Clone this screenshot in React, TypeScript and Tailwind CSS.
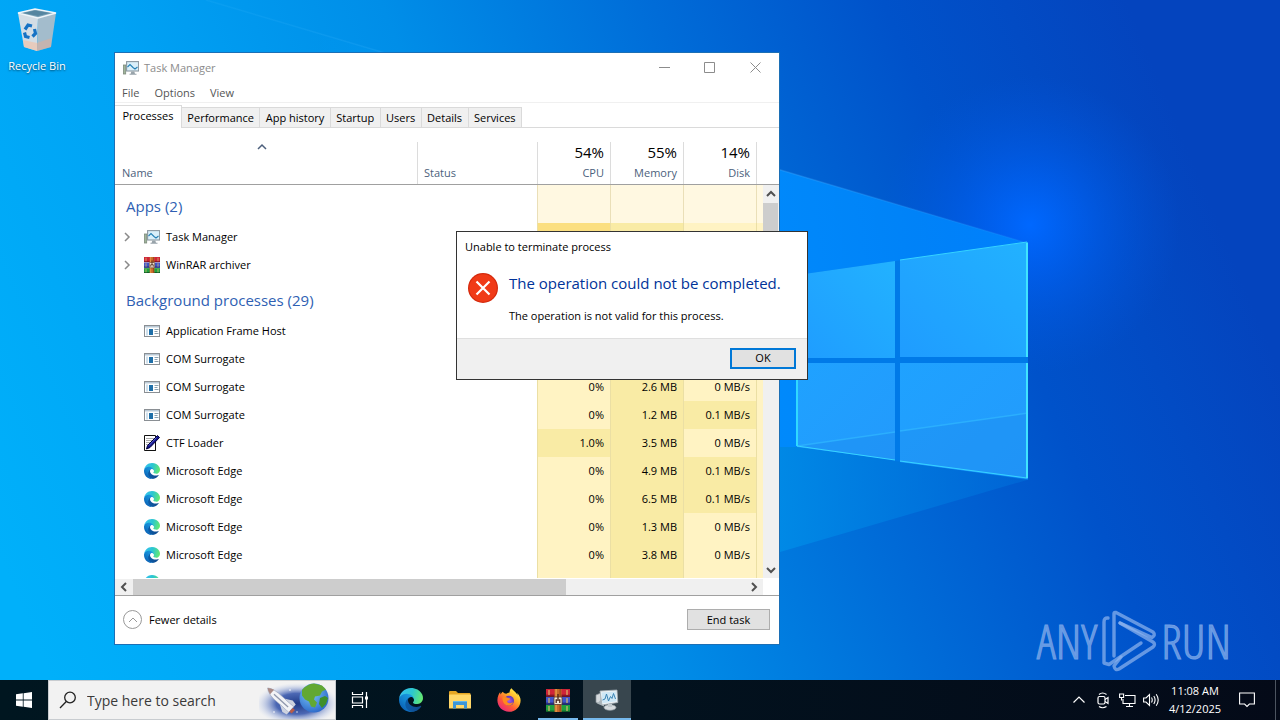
import { useId, type ReactNode } from 'react';
import clsx from 'clsx';

type Shade = 'head' | 'low' | 'mid' | 'high';

type Process = {
  name: string;
  icon: 'taskmgr' | 'winrar' | 'window' | 'ctf' | 'edge';
  expandable?: boolean;
  cells: [string, Shade][];
};

const shades: Record<Shade, string> = {
  head: 'bg-[#fff8e1] border-[#eadfb8]',
  low: 'bg-[#fff3c3] border-[#ebdfa4]',
  mid: 'bg-[#f9eba5] border-[#ebdfa4]',
  high: 'bg-[#fbdf80] border-[#ebdfa4]',
};

const tabs = ['Processes', 'Performance', 'App history', 'Startup', 'Users', 'Details', 'Services'];

const usage = [
  { label: 'CPU', value: '54%' },
  { label: 'Memory', value: '55%' },
  { label: 'Disk', value: '14%' },
];

const apps: Process[] = [
  { name: 'Task Manager', icon: 'taskmgr', expandable: true, cells: [['', 'high'], ['', 'mid'], ['', 'low']] },
  { name: 'WinRAR archiver', icon: 'winrar', expandable: true, cells: [['', 'low'], ['', 'mid'], ['', 'low']] },
];

const background: Process[] = [
  { name: 'Application Frame Host', icon: 'window', cells: [['', 'low'], ['', 'mid'], ['', 'low']] },
  { name: 'COM Surrogate', icon: 'window', cells: [['', 'low'], ['', 'mid'], ['', 'low']] },
  { name: 'COM Surrogate', icon: 'window', cells: [['0%', 'low'], ['2.6 MB', 'mid'], ['0 MB/s', 'low']] },
  { name: 'COM Surrogate', icon: 'window', cells: [['0%', 'low'], ['1.2 MB', 'mid'], ['0.1 MB/s', 'mid']] },
  { name: 'CTF Loader', icon: 'ctf', cells: [['1.0%', 'mid'], ['3.5 MB', 'mid'], ['0 MB/s', 'low']] },
  { name: 'Microsoft Edge', icon: 'edge', cells: [['0%', 'low'], ['4.9 MB', 'mid'], ['0.1 MB/s', 'mid']] },
  { name: 'Microsoft Edge', icon: 'edge', cells: [['0%', 'low'], ['6.5 MB', 'mid'], ['0.1 MB/s', 'mid']] },
  { name: 'Microsoft Edge', icon: 'edge', cells: [['0%', 'low'], ['1.3 MB', 'mid'], ['0 MB/s', 'low']] },
  { name: 'Microsoft Edge', icon: 'edge', cells: [['0%', 'low'], ['3.8 MB', 'mid'], ['0 MB/s', 'low']] },
  { name: '', icon: 'edge', cells: [['', 'low'], ['', 'mid'], ['', 'low']] },
];

/* ---------- icons ---------- */

function EdgeIcon({ className }: { className?: string }) {
  const id = useId();
  return (
    <svg viewBox="0 0 256 256" className={className}>
      <defs>
        <linearGradient id={`${id}a`} x1="0.2" y1="0.5" x2="1" y2="0.5">
          <stop offset="0" stopColor="#0c59a4" />
          <stop offset="1" stopColor="#114a8b" />
        </linearGradient>
        <linearGradient id={`${id}b`} x1="0.8" y1="0.1" x2="0.2" y2="0.9">
          <stop offset="0" stopColor="#1b9de2" />
          <stop offset="0.5" stopColor="#1384d0" />
          <stop offset="1" stopColor="#0a5fb4" />
        </linearGradient>
        <linearGradient id={`${id}c`} x1="0" y1="0.4" x2="1" y2="0.6">
          <stop offset="0" stopColor="#35c1f1" />
          <stop offset="0.5" stopColor="#2cc6cf" />
          <stop offset="1" stopColor="#66eb6e" />
        </linearGradient>
      </defs>
      <path fill={`url(#${id}a)`} d="M231 190.5c-3.4 1.8-6.9 3.4-10.5 4.7-11.5 4.3-23.6 6.5-35.9 6.5-47.3 0-88.5-32.5-88.5-74.3.1-11.4 6.4-21.9 16.4-27.3-42.8 1.8-53.8 46.4-53.8 72.5 0 73.9 68.1 81.4 82.8 81.4 7.9 0 19.8-2.3 27-4.6l1.3-.4c27.6-9.5 51-28.1 66.6-52.8 1.2-1.9.6-4.3-1.2-5.5-1.3-.8-2.9-.9-4.2-.2z" />
      <path fill={`url(#${id}b)`} d="M105.7 241.4c-8.9-5.5-16.6-12.8-22.7-21.3-26.3-36-18.4-86.5 17.6-112.8 3.8-2.7 7.7-5.2 11.9-7.2 3.1-1.5 8.4-4.1 15.5-4 10.1.1 19.6 4.9 25.7 13 4 5.4 6.3 11.9 6.4 18.7 0-.2 24.5-79.6-80-79.6-43.9 0-80 41.7-80 78.2-.2 19.3 4 38.5 12.1 56 27.6 58.8 94.8 87.6 156.4 67.1-21.1 6.6-44.1 3.7-62.9-8.1z" />
      <path fill={`url(#${id}c)`} d="M152.3 148.9c-.9 1-3.4 2.5-3.4 5.6 0 2.6 1.7 5.2 4.8 7.3 14.3 10 41.4 8.6 41.5 8.6 10.7 0 21.1-2.9 30.3-8.3 18.8-11 30.4-31.1 30.4-52.9.3-22.4-8-37.3-11.3-43.9C223.5 23.9 177.7 0 128 0 58 0 1 56.2 0 126.2c.5-36.5 36.8-66 80-66 3.5 0 23.5.3 42 10.1 16.3 8.6 24.9 19 30.8 29.3 6.2 10.7 7.3 24.1 7.3 29.5 0 5.3-2.7 13.3-7.8 19.9z" />
    </svg>
  );
}

function WinRarIcon({ className }: { className?: string }) {
  const books = [
    { y: 0, main: '#cf2438', dark: '#8a1526' },
    { y: 8, main: '#3f55cc', dark: '#27307c' },
    { y: 16, main: '#1fa040', dark: '#115f28' },
  ];
  return (
    <svg viewBox="0 0 24 23" preserveAspectRatio="none" className={className}>
      {books.map((b) => (
        <g key={b.y}>
          <rect x="0" y={b.y} width="24" height="7.4" fill={b.main} />
          <rect x="0" y={b.y + 5.6} width="24" height="1.8" fill={b.dark} />
          <rect x="2.4" y={b.y + 1} width="1.2" height="5" fill="#d9b96a" />
          <rect x="20.4" y={b.y + 1} width="1.2" height="5" fill="#d9b96a" />
        </g>
      ))}
      <rect x="8.5" y="0" width="7" height="23" fill="#c8692a" />
      <rect x="9.5" y="0" width="1.2" height="23" fill="#eaa24c" />
      <rect x="13.6" y="0" width="1" height="23" fill="#8c3f14" />
      <rect x="8" y="8" width="8" height="7.5" rx="1" fill="#f0e8d8" stroke="#5b3a22" strokeWidth="0.8" />
      <path d="M10.2 14v-3h3.6v3M12 5v5" fill="none" stroke="#4b241a" strokeWidth="1.3" />
    </svg>
  );
}

function TaskManagerIcon({ className }: { className?: string }) {
  return (
    <svg viewBox="0 0 16 16" className={className}>
      <rect x="0.5" y="5" width="2.2" height="9" fill="#9fb59a" stroke="#7d8a7c" strokeWidth="0.8" />
      <rect x="3.6" y="1.6" width="12" height="9.4" fill="#d9effa" stroke="#8b98a1" strokeWidth="1.1" />
      <path d="M4.5 7L7 4.5l3 3L12 9l2.5-2" fill="none" stroke="#2580b5" strokeWidth="1.1" />
      <path d="M8.3 11.5h3l.7 2.2h1.5v1.1h-7v-1.1h1.2z" fill="#98a3aa" />
    </svg>
  );
}

function WindowIcon({ className }: { className?: string }) {
  return (
    <svg viewBox="0 0 16 16" className={className}>
      <rect x="0.5" y="2.5" width="15" height="11" fill="#fff" stroke="#8a8f94" />
      <rect x="1" y="3" width="14" height="1.5" fill="#b9c9d6" />
      <rect x="2" y="5.5" width="2" height="7" fill="#cfe0ec" />
      <rect x="5" y="6" width="4" height="6" fill="#1f6fa8" />
      <path d="M10.5 6.5h4M10.5 8.5h3M10.5 10.5h4" stroke="#7f97a8" strokeWidth="0.9" />
    </svg>
  );
}

function CtfIcon({ className }: { className?: string }) {
  return (
    <svg viewBox="0 0 16 16" className={className}>
      <path d="M.5.5h11v15H.5z" fill="#fff" stroke="#111" />
      <path d="M2.5 3.5h7M2.5 5.5h6M2.5 7.5h4M2.5 9.5h3" stroke="#555" strokeDasharray="1 1" />
      <path d="M13.5.5l2 2L6 12.5 2.5 14l1-3.5z" fill="#14148c" stroke="#00003c" />
      <path d="M12.5 2.5L5 10.5" stroke="#8fa5ff" strokeWidth="0.6" />
      <path d="M11.5 8v7.5H2" stroke="#111" fill="none" />
    </svg>
  );
}

function FirefoxIcon({ className }: { className?: string }) {
  return (
    <svg viewBox="0 0 24 24" className={className}>
      <defs>
        <linearGradient id="ff-body" x1="0.85" y1="0.1" x2="0.2" y2="0.95">
          <stop offset="0" stopColor="#fff04a" />
          <stop offset="0.35" stopColor="#ffae28" />
          <stop offset="0.65" stopColor="#ff5a36" />
          <stop offset="1" stopColor="#e9267c" />
        </linearGradient>
        <radialGradient id="ff-core">
          <stop offset="0" stopColor="#a85cf0" />
          <stop offset="1" stopColor="#5b36b8" />
        </radialGradient>
      </defs>
      <path fill="url(#ff-body)" d="M22.8 9c-.6-1.7-1.9-3.4-2.9-4 .5 1 .8 2 .8 2.6C19 3.6 16.3 3.2 14.6.2c-1.5 1-2.1 3-2 4.3-1.3.1-2.5.6-3.4 1.3C8 5.6 6.6 5.2 6 3.8 4.8 4.4 4 5.6 3.7 6.400c-.4-.5-.5-1.7-.4-2.4C2 5.2.4 8.5.4 12.3.4 18.7 5.6 23.8 12 23.8s11.6-5 11.6-11.4c0-1.3-.3-2.400-.8-3.400z" />
      <circle cx="12" cy="12.8" r="5" fill="url(#ff-core)" />
      <path fill="#ff8a1e" d="M5.5 9.5c2-.9 4-.4 5.5.6 1 .2 2.2.3 2.2.9 0 .7-2 1.2-2.9 1.9-.4.6.2 2.2 2.2 2.3 1.7 0 2.6-1 3.6-.7-.8 2.4-3 3.5-5.3 3.1-3.600-.7-5.600-4.300-5.300-8.100z" />
    </svg>
  );
}

function ExplorerIcon({ className }: { className?: string }) {
  return (
    <svg viewBox="0 0 22 18" className={className}>
      <path d="M0 1a1 1 0 011-1h6l2 2h11.5a1 1 0 011 1v3H0z" fill="#e5a623" />
      <rect x="0" y="3.5" width="22" height="14" rx="0.6" fill="#ffd768" />
      <path d="M4 17.5V11a1 1 0 011-1h12a1 1 0 011 1v6.5h-3V14H7v3.5z" fill="#3c96d8" />
      <path d="M4 10.5h14" stroke="#62b7ea" />
    </svg>
  );
}

function TaskManagerLarge({ className }: { className?: string }) {
  return (
    <svg viewBox="0 0 24 24" className={className}>
      <path d="M1 7l5-2v11l-5-1.5z" fill="#d5dadd" stroke="#8d979c" strokeWidth="0.7" />
      <path d="M2 15.5l7 3V9" fill="#aab4b9" />
      <path d="M5 3l17-1 .8 12.5L7 17z" fill="#eef2f4" stroke="#a4afb5" strokeWidth="0.8" />
      <path d="M6.5 4.5l14.5-.9.5 9.7-14 2z" fill="#cfe8f6" />
      <path d="M7.5 12l2.5-1 1.5-5 2 7 2-4.5 1.5 2 1.5-5 2 5.5" fill="none" stroke="#3b84b4" />
      <ellipse cx="15" cy="19.5" rx="6" ry="2.8" fill="#d6dbde" stroke="#98a2a7" strokeWidth="0.7" />
      <path d="M13 16h4v3h-4z" fill="#c0c8cc" />
    </svg>
  );
}

function RecycleBinIcon({ className }: { className?: string }) {
  return (
    <svg viewBox="0 0 40 44" className={className}>
      <path d="M1 5l20 4-1 34-13-4z" fill="#d3dde5" />
      <path d="M39 5L21 9l-1 34 14-4z" fill="#a3bccc" />
      <path d="M1 5l17-4 21 4-18 5z" fill="#7ba3b8" stroke="#eef5fa" strokeWidth="1.3" />
      <path d="M6 5l12-2.5L33 5 21 8z" fill="#5585a0" />
      <path d="M6 32l14 3v8L7 39z" fill="#f0c3ac" opacity="0.7" />
      <path d="M20 35l14.5-5-.5 9-14 4z" fill="#dbaf9c" opacity="0.6" />
      <g fill="none" stroke="#1672c4" strokeWidth="3.2">
        <path d="M8 21.5l3-4.5 4 1" />
        <path d="M17.5 21l1 4.5-3 3" />
        <path d="M12.5 29.5l-4-1-1-4" />
      </g>
    </svg>
  );
}

function Caret({ dir, className }: { dir: 'up' | 'down' | 'left' | 'right'; className?: string }) {
  const d = {
    up: 'M1 7l4-4 4 4',
    down: 'M1 3l4 4 4-4',
    left: 'M7 1L3 5l4 4',
    right: 'M3 1l4 4-4 4',
  }[dir];
  return (
    <svg viewBox="0 0 10 10" className={className} fill="none" stroke="currentColor">
      <path d={d} />
    </svg>
  );
}

function ProcessIcon({ icon }: { icon: Process['icon'] }) {
  if (icon === 'taskmgr') return <TaskManagerIcon className="size-4 shrink-0" />;
  if (icon === 'winrar') return <WinRarIcon className="size-4 shrink-0" />;
  if (icon === 'window') return <WindowIcon className="size-4 shrink-0" />;
  if (icon === 'ctf') return <CtfIcon className="size-4 shrink-0" />;
  return <EdgeIcon className="size-4 shrink-0" />;
}

/* ---------- desktop ---------- */

function Wallpaper() {
  return (
    <svg className="absolute inset-0 size-full" viewBox="0 0 1280 680" preserveAspectRatio="xMidYMid slice">
      <defs>
        <linearGradient id="sky" gradientUnits="userSpaceOnUse" x1="0" y1="560" x2="1160" y2="80">
          <stop offset="0" stopColor="#00b0fa" />
          <stop offset="0.25" stopColor="#00a2f4" />
          <stop offset="0.45" stopColor="#008ee8" />
          <stop offset="0.65" stopColor="#006cd8" />
          <stop offset="0.82" stopColor="#0052ca" />
          <stop offset="1" stopColor="#0444be" />
        </linearGradient>
        <radialGradient id="glow" gradientUnits="userSpaceOnUse" cx="1030" cy="225" r="150">
          <stop offset="0" stopColor="#0068ff" />
          <stop offset="0.35" stopColor="#0064fa" stopOpacity="0.6" />
          <stop offset="1" stopColor="#0058e0" stopOpacity="0" />
        </radialGradient>
        <linearGradient id="beam" gradientUnits="userSpaceOnUse" x1="0" y1="0" x2="1027" y2="0">
          <stop offset="0.3" stopColor="#00a4ff" stopOpacity="0" />
          <stop offset="0.76" stopColor="#008cff" stopOpacity="0.9" />
          <stop offset="1" stopColor="#0088ff" stopOpacity="0.8" />
        </linearGradient>
        <linearGradient id="beam-edge" gradientUnits="userSpaceOnUse" x1="206" y1="0" x2="1027" y2="0">
          <stop offset="0" stopColor="#4cc0ff" stopOpacity="0.1" />
          <stop offset="0.7" stopColor="#4cb0ff" stopOpacity="0.3" />
          <stop offset="1" stopColor="#4cb0ff" stopOpacity="0.1" />
        </linearGradient>
        <linearGradient id="floor" gradientUnits="userSpaceOnUse" x1="400" y1="0" x2="1027" y2="0">
          <stop offset="0" stopColor="#00a4f4" stopOpacity="0" />
          <stop offset="0.6" stopColor="#008ee8" stopOpacity="0.8" />
          <stop offset="1" stopColor="#0070dc" stopOpacity="0.5" />
        </linearGradient>
        <linearGradient id="pane" x1="0" y1="1" x2="1" y2="0">
          <stop offset="0" stopColor="#1f9cff" />
          <stop offset="1" stopColor="#22b2ff" />
        </linearGradient>
        <linearGradient id="pane-low" x1="0" y1="0" x2="1" y2="1">
          <stop offset="0" stopColor="#1fa2ff" />
          <stop offset="1" stopColor="#239afc" />
        </linearGradient>
      </defs>
      <rect width="1280" height="680" fill="url(#sky)" />
      <rect width="1280" height="680" fill="url(#glow)" />
      <path d="M0 0H206L1027 243V362L797 447H0z" fill="url(#beam)" />
      <path d="M0 447H797L1027 362V480L340 680H0z" fill="url(#floor)" />
      <path d="M206 0L1027 243" stroke="url(#beam-edge)" strokeWidth="1.5" />
      <path d="M797 275L1028 242V480L797 447z" fill="#007ae8" />
      <path d="M797 275l98-14v97h-98z" fill="url(#pane)" />
      <path d="M900 260l128-18v115H900z" fill="url(#pane)" />
      <path d="M797 363h98v97l-98-13z" fill="url(#pane-low)" />
      <path d="M900 363h128v116l-128-17z" fill="url(#pane-low)" />
      <path d="M797 446l98-14v28zM900 431l128-18v65l-128-17z" fill="#1a84ea" fillOpacity="0.3" />
      <path d="M797 446l98-14M900 431l128-18" stroke="#30b8ff" strokeOpacity="0.7" strokeWidth="1.5" />
      <path d="M900 260l127-18M1027 478l-127-17M895 460l-98-14" fill="none" stroke="#36d4ff" />
      <path d="M1027 243v114M1027 363v115" stroke="#40e4ff" strokeWidth="2" />
      <path d="M797 363v83" stroke="#30d8ff" strokeWidth="2" />
    </svg>
  );
}

function Watermark() {
  return (
    <div className="absolute right-[49px] bottom-[8px] flex items-center gap-1 font-['Open_Sans_Condensed_Light','Open_Sans_Condensed','Liberation_Sans_Narrow',sans-serif] text-5xl leading-[62px] font-light text-[#8fb5ee]/70">
      <span className="[-webkit-text-stroke:1px_#6f9fe6]">ANY</span>
      <svg viewBox="0 0 56 62" className="h-[62px] w-14 shrink-0" fill="none" stroke="currentColor" strokeWidth="3.4" strokeLinejoin="round" strokeLinecap="round">
        <path d="M13 46V3.500q0-1.500 2-1L52 22q3 3-1 5.500L19 13" />
        <path d="M7 8q-4-.5-4 4v41l5 1.500L40 33" />
        <path d="M20 47L13 56q1 5 5 3L52 37q3-3 0-5L19 13" />
      </svg>
      <span className="[-webkit-text-stroke:1px_#6f9fe6]">RUN</span>
    </div>
  );
}

/* ---------- task manager ---------- */

function ProcessRow({ process }: { process: Process }) {
  return (
    <tr>
      <td colSpan={2} className="p-0">
        <div className="flex h-7 items-center pl-[9px]">
          <span className="flex w-5 text-[#8a8a8a]">
            {process.expandable && <Caret dir="right" className="-ml-0.5 size-2.5 stroke-[1.5]" />}
          </span>
          <ProcessIcon icon={process.icon} />
          <span className="pl-1.5">{process.name}</span>
        </div>
      </td>
      {process.cells.map(([value, shade], i) => (
        <td key={i} className={clsx('border-r px-1.5 py-0 text-right', i === 0 && 'border-l', shades[shade])}>
          {value}
        </td>
      ))}
      <td className={shades.low} />
    </tr>
  );
}

function GroupRow({ children }: { children: ReactNode }) {
  return (
    <tr>
      <td colSpan={2} className="p-0">
        <div className="flex h-[38px] items-center pt-1 pl-[11px] text-[15px] text-[#2f5fb3]">{children}</div>
      </td>
      {usage.map((u, i) => (
        <td key={u.label} className={clsx('border-r p-0', i === 0 && 'border-l', shades.head)} />
      ))}
      <td className={shades.head} />
    </tr>
  );
}

function ProcessTable() {
  return (
    <div className="flex min-h-0 flex-1 overflow-hidden">
      <div className="min-w-0 flex-1 overflow-hidden">
        <table className="w-full table-fixed border-separate border-spacing-0">
          <colgroup>
            <col />
            <col className="w-[119px]" />
            <col className="w-[74px]" />
            <col className="w-[73px]" />
            <col className="w-[73px]" />
            <col className="w-[6px]" />
          </colgroup>
          <thead>
            <tr className="text-[#4c5f7c]">
              <th className="border-b border-[#a0a0a0] p-0 pt-3.5 text-left font-normal">
                <div className="flex h-[42px] flex-col justify-between border-r border-[#dcdcdc] px-[7px] pb-[3px]">
                  <Caret dir="up" className="mr-2 size-2.5 self-center stroke-[1.5]" />
                  <span className="leading-4">Name</span>
                </div>
              </th>
              <th className="border-b border-[#a0a0a0] p-0 pt-3.5 text-left font-normal">
                <div className="flex h-[42px] items-end px-1.5 pb-[3px] leading-4">Status</div>
              </th>
              {usage.map((u, i) => (
                <th key={u.label} className="border-b border-[#a0a0a0] p-0 pt-3.5 text-right font-normal">
                  <div className={clsx('flex h-[42px] flex-col justify-between border-r border-[#dcdcdc] px-1.5 pb-[3px]', i === 0 && 'border-l')}>
                    <span className="text-[15px] leading-5 text-black">{u.value}</span>
                    <span className="leading-4">{u.label}</span>
                  </div>
                </th>
              ))}
              <th className="border-b border-[#a0a0a0] p-0" />
            </tr>
          </thead>
          <tbody>
            <GroupRow>Apps (2)</GroupRow>
            {apps.map((p) => (
              <ProcessRow key={p.name} process={p} />
            ))}
            <GroupRow>Background processes (29)</GroupRow>
            {background.map((p, i) => (
              <ProcessRow key={i} process={p} />
            ))}
          </tbody>
        </table>
      </div>
      <div className="flex w-4 flex-col">
        <div className="h-[57px] border-b border-[#a0a0a0]" />
        <div className="flex min-h-0 flex-1 flex-col items-center bg-[#f0f0f0] pr-px text-[#505050]">
          <div className="flex h-[18px] items-center">
            <Caret dir="up" className="size-2.5 stroke-2" />
          </div>
          <div className="h-28 w-full bg-[#cdcdcd]" />
          <Caret dir="down" className="mt-auto mb-[3px] size-2.5 stroke-2" />
        </div>
      </div>
    </div>
  );
}

function TaskManagerWindow() {
  return (
    <section className="absolute top-[52px] left-[114px] flex h-[593px] w-[666px] flex-col border border-[#1c6fb5] bg-white text-black">
      <header className="flex h-[30px] shrink-0 items-center pl-2 text-[#8c8c8c]">
        <TaskManagerIcon className="size-4" />
        <h1 className="pl-[5px]">Task Manager</h1>
        <div className="ml-auto flex self-start">
          <button aria-label="Minimize" className="grid h-7 w-[45px] place-items-center">
            <svg viewBox="0 0 11 11" className="size-[11px]" stroke="currentColor"><path d="M0 5.5h11" /></svg>
          </button>
          <button aria-label="Maximize" className="grid h-7 w-[45px] place-items-center">
            <svg viewBox="0 0 11 11" className="size-[11px]" fill="none" stroke="currentColor"><path d="M.5.5h10v10H.5z" /></svg>
          </button>
          <button aria-label="Close" className="grid h-7 w-[47px] place-items-center">
            <svg viewBox="0 0 11 11" className="size-[11px]" stroke="currentColor"><path d="M.5.5l10 10M10.5.5l-10 10" /></svg>
          </button>
        </div>
      </header>

      <nav className="flex h-5 shrink-0 items-center gap-[15px] border-b border-[#f0f0f0] pl-[7px] text-[#555]">
        <button>File</button>
        <button>Options</button>
        <button>View</button>
      </nav>

      <div className="h-[25px] shrink-0 border-b border-[#dadada] pt-0.5">
        <div role="tablist" className="flex w-[407px] items-end">
          {tabs.map((tab, i) => (
            <button
              key={tab}
              role="tab"
              aria-selected={i === 0}
              className={clsx(
                'grow border-t border-r border-[#dadada] px-[5px]',
                i === 0 ? '-mb-px h-[23px] bg-white px-[7px] pb-0.5' : 'h-5 bg-[#f0f0f0]',
              )}
            >
              {tab}
            </button>
          ))}
        </div>
      </div>

      <ProcessTable />

      <div className="flex h-[17px] shrink-0 items-center border-t border-white pr-4 text-[#505050]">
        <div className="flex h-4 flex-1 items-center bg-[#f0f0f0]">
          <Caret dir="left" className="mx-1 size-2.5 stroke-2" />
          <div className="h-full w-[433px] bg-[#cdcdcd]" />
          <Caret dir="right" className="mr-1 ml-auto size-2.5 stroke-2" />
        </div>
      </div>

      <footer className="flex h-[49px] shrink-0 items-center justify-between border-t border-[#a0a0a0] pr-[9px] pb-px pl-2">
        <button className="flex items-center gap-[7px]">
          <span className="grid size-[19px] place-items-center rounded-full border border-[#999] text-[#999]">
            <Caret dir="up" className="size-2.5" />
          </span>
          Fewer details
        </button>
        <button className="h-[21px] w-[83px] border border-[#adadad] bg-[#e1e1e1]">End task</button>
      </footer>
    </section>
  );
}

function ErrorDialog() {
  return (
    <div role="alertdialog" className="absolute top-[231px] left-[456px] w-[352px] border border-[#333] bg-white text-black">
      <p className="px-2 pt-1.5 leading-[18px]">Unable to terminate process</p>
      <div className="flex gap-[11px] px-[11px] pt-[15px] pb-3.5">
        <svg viewBox="0 0 30 30" className="mt-0.5 size-[30px] shrink-0">
          <circle cx="15" cy="15" r="15" fill="#d4290c" />
          <circle cx="15" cy="15" r="13.8" fill="#f03a17" />
          <path d="M8.5 8.5l13 13M21.5 8.5l-13 13" stroke="#fff" strokeWidth="2.2" />
        </svg>
        <div>
          <h2 className="text-[15px] leading-6 whitespace-nowrap text-[#003399]">The operation could not be completed.</h2>
          <p className="pt-[13px] leading-4">The operation is not valid for this process.</p>
        </div>
      </div>
      <div className="flex h-[41px] items-center justify-end border-t border-[#dfdfdf] bg-[#f0f0f0] pr-[11px] pb-0.5">
        <button className="h-[21px] w-[66px] border-2 border-[#0078d7] bg-[#e1e1e1] leading-4">OK</button>
      </div>
    </div>
  );
}

/* ---------- taskbar ---------- */

function SearchArt() {
  return (
    <svg viewBox="0 0 76 38" className="h-[38px] w-[76px] shrink-0">
      <defs>
        <radialGradient id="space" cx="0.5" cy="0.6" r="0.55">
          <stop offset="0" stopColor="#203a86" />
          <stop offset="0.5" stopColor="#4c68b4" />
          <stop offset="1" stopColor="#c9d6f2" stopOpacity="0" />
        </radialGradient>
        <radialGradient id="ocean" cx="0.4" cy="0.35" r="0.7">
          <stop offset="0" stopColor="#7cc8f8" />
          <stop offset="1" stopColor="#2a66c8" />
        </radialGradient>
      </defs>
      <rect width="76" height="38" fill="url(#space)" />
      {/* shuttle */}
      <g transform="rotate(42 22 19)">
        <path d="M4 19q5-4 18-3.500h14v7.500H22Q9 24 4 19z" fill="#f2f3f6" stroke="#9aa3bb" strokeWidth="0.6" />
        <path d="M4 19q2-2 6-3v6q-4-1-6-3z" fill="#a98a86" />
        <path d="M24 15.5l7-4 5 1v3zM24 23l7 4 5-1v-3z" fill="#cdd2df" />
        <path d="M13 19.5h19" stroke="#8f97ac" strokeWidth="1.3" />
        <path d="M36 17h3v5h-3z" fill="#b85c48" />
      </g>
      <circle cx="55" cy="17" r="14.5" fill="url(#ocean)" />
      <path d="M43 9q5-6 12-6.500l8 2 4 4-4 2-2 4-5 1-1 3 3 3-2 5-4-1-2-5-4-2-3-4z" fill="#62a832" />
      <path d="M61 17l5-2 3 2-2 6-4 4-3-4z" fill="#3f8f2a" />
      <g fill="#fff">
        <circle cx="31" cy="9" r="0.8" />
        <circle cx="15" cy="31" r="0.8" />
        <circle cx="38" cy="31" r="0.7" />
      </g>
    </svg>
  );
}

function TaskbarButton({ label, state, children }: { label: string; state?: 'open' | 'active'; children: ReactNode }) {
  return (
    <button
      aria-label={label}
      className={clsx('relative grid h-10 w-12 place-items-center', state === 'active' && 'bg-[#38464e]')}
    >
      {children}
      {state && (
        <span className={clsx('absolute bottom-0 h-0.5 bg-[#76b9ed]', state === 'active' ? 'inset-x-0' : 'inset-x-1')} />
      )}
    </button>
  );
}

function Taskbar() {
  return (
    <footer className="relative flex h-10 shrink-0 items-center bg-gradient-to-r from-[#001620] via-[#02121e] to-[#040a18] text-white">
      <button aria-label="Start" className="grid h-10 w-12 place-items-center">
        <svg viewBox="0 0 16 16" className="size-4" fill="#fff">
          <path d="M0 2.3l6.8-1v6.3H0zM7.6 1.2L16 0v7.6H7.6zM0 8.4h6.8v6.3l-6.8-1zM7.6 8.4H16V16l-8.4-1.2z" />
        </svg>
      </button>

      <label className="flex h-10 w-72 items-center overflow-hidden border border-[#c8ccd0] bg-[#f2f2f2] pl-2.5">
        <svg viewBox="0 0 18 18" className="size-[18px] shrink-0" fill="none" stroke="#222" strokeWidth="1.3">
          <circle cx="11" cy="6.5" r="5.3" />
          <path d="M7.3 10.5L1 17" />
        </svg>
        <input
          aria-label="Search"
          placeholder="Type here to search"
          className="min-w-0 flex-1 bg-transparent pt-0.5 pl-2.5 text-sm text-black outline-none placeholder:text-[#3a3a3a]"
        />
        <SearchArt />
      </label>

      <div className="flex gap-px">
        <button aria-label="Task View" className="mr-0.5 grid h-10 w-12 place-items-center">
          <svg viewBox="0 0 18 16" className="h-4 w-[18px]" fill="none" stroke="#fff" strokeWidth="1.2">
            <path d="M1.5 0v2.5h10V0M1.5 16v-2.5h10V16M1.5 5h10v6h-10zM15.5 0v16" />
            <path d="M14 4.5h3v3h-3z" fill="#fff" stroke="none" />
          </svg>
        </button>
        <TaskbarButton label="Microsoft Edge"><EdgeIcon className="size-6" /></TaskbarButton>
        <TaskbarButton label="File Explorer"><ExplorerIcon className="h-[18px] w-[22px]" /></TaskbarButton>
        <TaskbarButton label="Firefox"><FirefoxIcon className="size-6" /></TaskbarButton>
        <TaskbarButton label="WinRAR" state="open"><WinRarIcon className="h-[23px] w-6" /></TaskbarButton>
        <TaskbarButton label="Task Manager" state="active"><TaskManagerLarge className="size-6" /></TaskbarButton>
      </div>

      <div className="ml-auto flex h-full items-center">
        <button aria-label="Show hidden icons" className="grid h-10 w-6 place-items-center">
          <svg viewBox="0 0 12 12" className="size-3" fill="none" stroke="#fff" strokeWidth="1.2"><path d="M.5 8.5L6 3l5.5 5.5" /></svg>
        </button>
        <button aria-label="Meet Now" className="grid h-10 w-6 place-items-center">
          <svg viewBox="0 0 16 18" className="h-[18px] w-4" fill="none" stroke="#fff" strokeWidth="1.2">
            <rect x="3" y="5.5" width="7" height="7.5" rx="1.5" />
            <path d="M10 8.5l3-2v6l-3-2M4 3.5q3.5-3 7.5 0M4 15.5q3.5 2.500 7.5 0" />
          </svg>
        </button>
        <button aria-label="Network" className="grid h-10 w-6 place-items-center">
          <svg viewBox="0 0 17 16" className="h-4 w-[17px]" fill="none" stroke="#fff" strokeWidth="1.1">
            <path d="M6 3.5h10v8H4V7M10.5 11.5v3M7 14.5h7M.6 2h4v3.5h-4zM2.500 5.500v3" />
          </svg>
        </button>
        <button aria-label="Volume" className="grid h-10 w-6 place-items-center">
          <svg viewBox="0 0 17 14" className="h-3.5 w-[17px]" fill="none" stroke="#fff" strokeWidth="1.1">
            <path d="M.6 5H3l3.5-3.5v11L3 9H.6zM8.5 4.5q1.500 2.500 0 5M10.8 3q2.600 4 0 8M13.2 1.3q4 5.700 0 11.4" />
          </svg>
        </button>
        <time className="w-16 text-center leading-[18px]">
          11:08 AM
          <br />
          4/12/2025
        </time>
        <button aria-label="Notifications" className="grid h-10 w-10 place-items-center">
          <svg viewBox="0 0 16 16" className="size-4" fill="none" stroke="#fff" strokeWidth="1.1">
            <path d="M.6 1h14.8v11h-5L8 14.500 5.600 12h-5z" />
          </svg>
        </button>
        <div className="ml-2 h-full w-[5px] border-l border-[#4c5460]" />
      </div>
    </footer>
  );
}

export default function App() {
  return (
    <div className="relative flex h-screen flex-col overflow-hidden bg-[#0078d7] font-['Open_Sans','Noto_Sans',sans-serif] text-[11px] leading-4">
      <main className="relative min-h-0 flex-1 overflow-hidden">
        <Wallpaper />
        <div className="relative flex w-[74px] flex-col items-center gap-1.5 pt-2 text-white">
          <RecycleBinIcon className="h-11 w-10" />
          <span className="[text-shadow:0_1px_2px_rgba(0,0,0,0.6)]">Recycle Bin</span>
        </div>
        <Watermark />
        <TaskManagerWindow />
        <ErrorDialog />
      </main>
      <Taskbar />
    </div>
  );
}
